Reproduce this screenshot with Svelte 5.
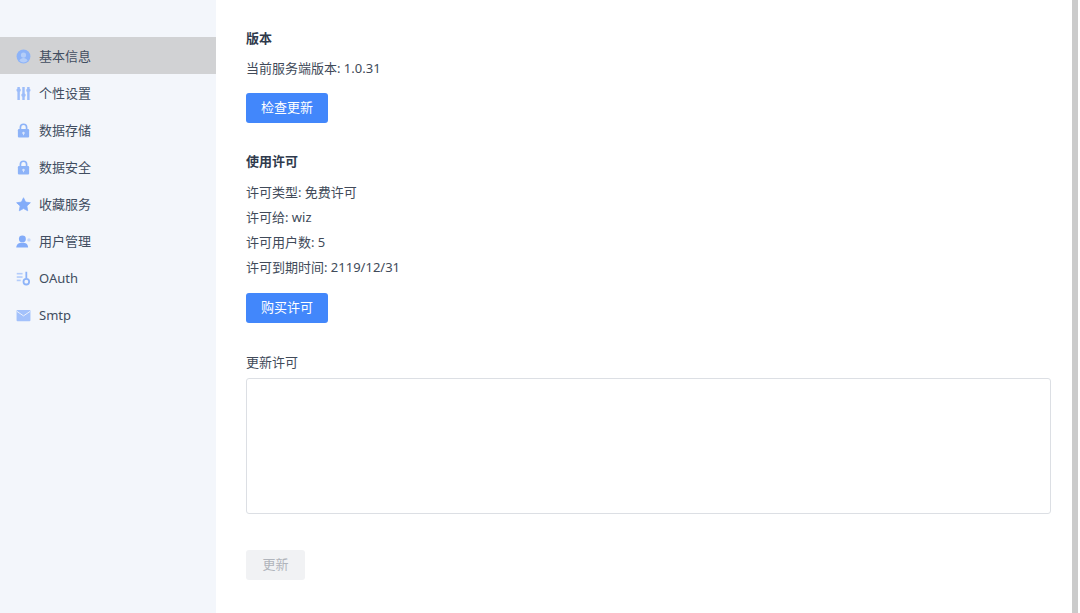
<script>
  const rows = ['许可类型: 免费许可', '许可给: wiz', '许可用户数: 5', '许可到期时间: 2119/12/31'];
</script>

<div class="page">
  <nav class="side">
    <a class="item active">
      <svg viewBox="0 0 16 16"><circle cx="8" cy="8" r="7.4" fill="#8db3f8"/><circle cx="8" cy="6.4" r="2.8" fill="#b4cdf8"/><path d="M3.6 12.6c.8-2 2.6-2.9 4.4-2.9s3.6.9 4.4 2.9A6.4 6.4 0 0 1 8 14.4a6.4 6.4 0 0 1-4.4-1.8z" fill="#b4cdf8"/></svg>
      基本信息
    </a>
    <a class="item">
      <svg viewBox="0 0 16 16" fill="#9dbdfa"><path d="M1.5 1h2.6v1.6L5 3.4v1.8l-.9.8V15H1.500V6l-.9-.8V3.400l.9-.8z"/><path d="M6.700 1h2.600v7l.9.8v1.800l-.9.8V15H6.700v-3.600l-.9-.8V8.800l.9-.8z"/><path d="M11.900 1h2.600v1.800l.9.8v1.800l-.9.8V15h-2.600V6.400l-.9-.8V3.600l.9-.8z"/></svg>
      个性设置
    </a>
    <a class="item">
      <svg viewBox="0 0 16 16"><path d="M4.700 7.500V4.600a3.300 3.300 0 0 1 6.600 0v2.900" fill="none" stroke="#8db3f8" stroke-width="1.800"/><rect x="2" y="6.500" width="12" height="9" rx="1.200" fill="#8db3f8"/><circle cx="8" cy="10.600" r="1.300" fill="#dbe6fb"/><rect x="7.500" y="10.800" width="1" height="2.200" fill="#dbe6fb"/></svg>
      数据存储
    </a>
    <a class="item">
      <svg viewBox="0 0 16 16"><path d="M4.700 7.500V4.600a3.300 3.300 0 0 1 6.600 0v2.900" fill="none" stroke="#8db3f8" stroke-width="1.800"/><rect x="2" y="6.500" width="12" height="9" rx="1.200" fill="#8db3f8"/><circle cx="8" cy="10.600" r="1.300" fill="#dbe6fb"/><rect x="7.500" y="10.800" width="1" height="2.200" fill="#dbe6fb"/></svg>
      数据安全
    </a>
    <a class="item">
      <svg viewBox="0 0 16 16"><path d="M8 .8l2.200 4.600 5.100.7-3.700 3.500.9 5.100L8 12.300l-4.500 2.400.9-5.100L.7 6.100l5.100-.7z" fill="#83acf9" stroke="#83acf9" stroke-linejoin="round" stroke-width=".8"/></svg>
      收藏服务
    </a>
    <a class="item">
      <svg viewBox="0 0 16 16"><circle cx="6.800" cy="5.200" r="3.700" fill="#83acf9"/><path d="M.3 14.500c0-3.900 2.800-5.300 6.500-5.300s6.100 1.400 6.100 5.300z" fill="#83acf9"/><circle cx="13.800" cy="6.300" r="1.800" fill="#c7d9fb"/></svg>
      用户管理
    </a>
    <a class="item">
      <svg viewBox="0 0 16 16"><g fill="#b3ccfb"><rect x=".8" y="2" width="6.200" height="1.700"/><rect x=".8" y="5.600" width="6.200" height="1.700"/><rect x=".8" y="9.200" width="4.200" height="1.700"/></g><path d="M11 .8v7" stroke="#8db3f8" stroke-width="1.900"/><circle cx="11" cy="11.400" r="3" fill="none" stroke="#8db3f8" stroke-width="1.900"/></svg>
      OAuth
    </a>
    <a class="item">
      <svg viewBox="0 0 16 16"><rect x=".6" y="2" width="14.800" height="12" rx="1" fill="#a3c1fb"/><path d="M1 3.600L8 8.400l7-4.800" fill="none" stroke="#eef2fb" stroke-width="1"/></svg>
      Smtp
    </a>
  </nav>

  <main class="main">
    <h4 class="head first">版本</h4>
    <p class="line cur">当前服务端版本: 1.0.31</p>
    <button class="btn">检查更新</button>

    <h4 class="head second">使用许可</h4>
    <div class="rows">
      {#each rows as r}
        <p class="line">{r}</p>
      {/each}
    </div>
    <button class="btn buy">购买许可</button>

    <label class="lab" for="lic">更新许可</label>
    <textarea id="lic" class="area"></textarea>
    <button class="btn off" disabled>更新</button>
  </main>

  <div class="bar"></div>
</div>

<style>
  :global(body) {
    margin: 0;
    background: #fff;
    overflow: hidden;
  }
  .page {
    display: flex;
    height: 613px;
    font-family: "Noto Sans", "Noto Sans CJK SC", sans-serif;
    font-size: 13px;
    color: #414a59;
  }
  .side {
    width: 216px;
    flex: none;
    background: #f3f6fb;
    padding-top: 37px;
    box-sizing: border-box;
  }
  .item {
    display: flex;
    align-items: center;
    gap: 8px;
    box-sizing: border-box;
    height: 37px;
    padding: 2px 0 0 16px;
    color: #414d60;
    line-height: 35px;
  }
  .item.active {
    background: #d1d2d4;
  }
  .item svg {
    width: 15px;
    height: 15px;
    flex: none;
  }
  .main {
    flex: none;
    width: 805px;
    margin-left: 30px;
    display: flex;
    flex-direction: column;
    align-items: flex-start;
  }
  .head {
    margin: 0;
    font-size: 13px;
    font-weight: 700;
    line-height: 18px;
    color: #2f3a4c;
  }
  .first { margin-top: 29px; }
  .second { margin-top: 29px; }
  .line {
    margin: 0;
    line-height: 25px;
    height: 25px;
  }
  .cur { margin-top: 9px; }
  .rows { margin-top: 10px; }
  .btn {
    width: 82px;
    height: 30px;
    margin-top: 12px;
    padding: 0 0 4px;
    border: 0;
    border-radius: 3px;
    background: #4287fb;
    color: #fff;
    font: inherit;
  }
  .buy { margin-top: 13px; }
  .off {
    width: 59px;
    margin-top: 36px;
    background: #f1f2f4;
    color: #b0b4bb;
  }
  .lab {
    margin-top: 30px;
    line-height: 18px;
  }
  .area {
    display: block;
    width: 805px;
    height: 136px;
    margin-top: 7px;
    box-sizing: border-box;
    border: 1px solid #dcdfe4;
    border-radius: 3px;
    resize: none;
    background: #fff;
  }
  .bar {
    position: fixed;
    top: 0;
    bottom: 0;
    left: 1072px;
    width: 6px;
    background: #cbcbcb;
  }
</style>
